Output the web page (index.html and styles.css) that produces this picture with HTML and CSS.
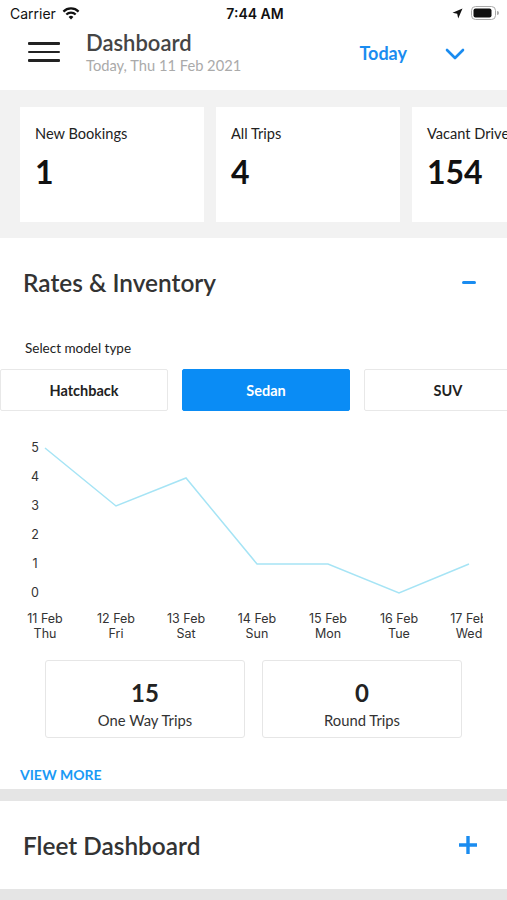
FILE: index.html
```html
<!DOCTYPE html>
<html lang="en">
<head>
  <meta charset="UTF-8">
  <meta name="viewport" content="width=device-width, initial-scale=1.0">
  <title>Dashboard</title>
  <link rel="stylesheet" href="styles.css">
</head>
<body>
  <div class="status-bar">
    <div class="status-left">
      <span>Carrier</span>
      <svg class="wifi" width="18" height="13" viewBox="0 0 18 13">
        <path d="M9 12.5 L6.6 9.9 A3.4 3.4 0 0 1 11.4 9.9 Z" fill="#111"/>
        <path d="M4.3 7.6 A6.6 6.6 0 0 1 13.7 7.6" stroke="#111" stroke-width="2.2" fill="none"/>
        <path d="M1.4 4.6 A10.8 10.8 0 0 1 16.6 4.6" stroke="#111" stroke-width="2.2" fill="none"/>
      </svg>
    </div>
    <div class="status-time">7:44 AM</div>
    <div class="status-right">
      <svg width="11" height="11" viewBox="0 0 11 11">
        <path d="M10.5 0.5 L0.5 4.8 L5.2 5.8 L6.2 10.5 Z" fill="#111"/>
      </svg>
      <svg width="29" height="14" viewBox="0 0 29 14">
        <rect x="0.5" y="0.5" width="24" height="13" rx="4" fill="none" stroke="#aaa"/>
        <rect x="2.5" y="2.5" width="18" height="9" rx="2" fill="#111"/>
        <path d="M26 5 Q28 5 28 7 Q28 9 26 9 Z" fill="#aaa"/>
      </svg>
    </div>
  </div>

  <header class="top-bar">
    <div class="menu-icon">
      <span></span><span></span><span></span>
    </div>
    <div class="title-block">
      <h1>Dashboard</h1>
      <div class="subtitle">Today, Thu 11 Feb 2021</div>
    </div>
    <div class="period">Today</div>
    <svg class="chevron" width="20" height="12" viewBox="0 0 20 12">
      <path d="M2 2 L10 10 L18 2" stroke="#1a8cf0" stroke-width="2.6" fill="none" stroke-linecap="round" stroke-linejoin="round"/>
    </svg>
  </header>

  <section class="stats-band">
    <div class="stat-card">
      <div class="stat-label">New Bookings</div>
      <div class="stat-value">1</div>
    </div>
    <div class="stat-card">
      <div class="stat-label">All Trips</div>
      <div class="stat-value">4</div>
    </div>
    <div class="stat-card">
      <div class="stat-label">Vacant Drivers</div>
      <div class="stat-value">154</div>
    </div>
  </section>

  <section class="panel">
    <div class="panel-head">
      <h2>Rates &amp; Inventory</h2>
      <span class="minus"></span>
    </div>
    <div class="select-label">Select model type</div>
    <div class="model-tabs">
      <div class="model-tab">Hatchback</div>
      <div class="model-tab active">Sedan</div>
      <div class="model-tab">SUV</div>
    </div>

    <svg class="chart" width="507" height="216" viewBox="0 0 507 216">
      <defs>
        <clipPath id="plot-clip"><rect x="0" y="0" width="483" height="216"/></clipPath>
      </defs>
      <g class="y-labels">
        <text x="35" y="20">5</text>
        <text x="35" y="49">4</text>
        <text x="35" y="78">3</text>
        <text x="35" y="107">2</text>
        <text x="35" y="136">1</text>
        <text x="35" y="165">0</text>
      </g>
      <polyline points="45,16 116,74 186,46 257,132 328,132 399,161 469,132" fill="none" stroke="#a6e4f5" stroke-width="1.5"/>
      <g class="x-labels" clip-path="url(#plot-clip)">
        <text x="45" y="191">11 Feb</text><text x="45" y="206">Thu</text>
        <text x="116" y="191">12 Feb</text><text x="116" y="206">Fri</text>
        <text x="186" y="191">13 Feb</text><text x="186" y="206">Sat</text>
        <text x="257" y="191">14 Feb</text><text x="257" y="206">Sun</text>
        <text x="328" y="191">15 Feb</text><text x="328" y="206">Mon</text>
        <text x="399" y="191">16 Feb</text><text x="399" y="206">Tue</text>
        <text x="469" y="191">17 Feb</text><text x="469" y="206">Wed</text>
      </g>
    </svg>

    <div class="trip-cards">
      <div class="trip-card">
        <div class="trip-value">15</div>
        <div class="trip-label">One Way Trips</div>
      </div>
      <div class="trip-card">
        <div class="trip-value">0</div>
        <div class="trip-label">Round Trips</div>
      </div>
    </div>

    <a class="view-more" href="#">VIEW MORE</a>
  </section>

  <section class="panel fleet">
    <div class="panel-head">
      <h2>Fleet Dashboard</h2>
      <svg width="20" height="20" viewBox="0 0 20 20">
        <path d="M10 1 V19 M1 10 H19" stroke="#1a8cf0" stroke-width="3.4"/>
      </svg>
    </div>
  </section>
  <div class="bottom-band"></div>
</body>
</html>
```

FILE: styles.css
```css
body {
  margin: 0;
  width: 507px;
  overflow: hidden;
  background-color: #ffffff;
  font-family: Lato, "Open Sans", sans-serif;
  color: #333;
}

.status-bar {
  height: 26px;
  display: flex;
  align-items: center;
  justify-content: space-between;
  padding: 0 7px 0 10px;
  font-family: Inter, "Liberation Sans", sans-serif;
  font-size: 14px;
  color: #111;
}

.status-left {
  display: flex;
  align-items: center;
  gap: 6px;
  width: 120px;
}

.status-time {
  font-weight: 600;
  font-size: 14px;
}

.status-right {
  display: flex;
  align-items: center;
  justify-content: flex-end;
  gap: 8px;
  width: 120px;
}

.top-bar {
  height: 64px;
  box-sizing: border-box;
  display: flex;
  align-items: flex-start;
  padding: 3px 0 0 28px;
}

.menu-icon {
  width: 32px;
  display: flex;
  flex-direction: column;
  gap: 6px;
  margin: 13px 26px 0 0;
}

.menu-icon span {
  display: block;
  height: 2.5px;
  background-color: #222;
  border-radius: 1px;
}

.title-block {
  flex: 1;
}

.title-block h1 {
  margin: 0;
  font-size: 22px;
  font-weight: 600;
  color: #454545;
  line-height: 28px;
}

.subtitle {
  font-size: 14.7px;
  color: #aaaaaa;
  line-height: 16px;
}

.period {
  font-size: 18px;
  font-weight: 700;
  color: #1a8cf0;
  margin: 13px 38px 0 0;
}

.chevron {
  margin: 19px 42px 0 0;
}

.stats-band {
  background-color: #f2f2f2;
  padding: 17px 0 16px 20px;
  display: flex;
  gap: 12px;
  overflow: hidden;
}

.stat-card {
  flex: 0 0 184px;
  height: 115px;
  box-sizing: border-box;
  background-color: #ffffff;
  padding: 18px 15px;
}

.stat-label {
  font-size: 14.6px;
  color: #222;
}

.stat-value {
  font-size: 32px;
  font-weight: 700;
  color: #111;
  margin-top: 10px;
}

.panel {
  background-color: #ffffff;
}

.panel-head {
  display: flex;
  align-items: center;
  justify-content: space-between;
  padding: 27px 29px 0 23px;
  height: 34px;
}

.panel-head h2 {
  margin: 0;
  font-size: 24.4px;
  font-weight: 600;
  color: #333;
}

.minus {
  display: block;
  width: 14px;
  height: 3px;
  border-radius: 2px;
  background-color: #1a8cf0;
  margin-right: 2px;
}

.select-label {
  font-size: 13.5px;
  color: #222;
  padding: 41px 0 0 25px;
  line-height: 16px;
}

.model-tabs {
  display: flex;
  gap: 14px;
  margin-top: 13px;
  overflow: hidden;
}

.model-tab {
  flex: 0 0 168px;
  height: 42px;
  box-sizing: border-box;
  border: 1px solid #e8e8e8;
  border-radius: 2px;
  display: flex;
  align-items: center;
  justify-content: center;
  font-size: 14.5px;
  font-weight: 700;
  color: #222;
}

.model-tab.active {
  background-color: #0a8cf5;
  border-color: #0a8cf5;
  color: #ffffff;
}

.chart {
  display: block;
  margin-top: 21px;
}

.chart text {
  font-family: Inter, "Liberation Sans", sans-serif;
  font-size: 12.5px;
  fill: #333;
}

.chart .x-labels text,
.chart .y-labels text {
  text-anchor: middle;
}

.trip-cards {
  display: flex;
  gap: 17px;
  padding: 12px 0 0 45px;
}

.trip-card {
  width: 200px;
  height: 78px;
  box-sizing: border-box;
  border: 1px solid #e6e6e6;
  border-radius: 3px;
  padding-top: 19px;
  display: flex;
  flex-direction: column;
  align-items: center;
}

.trip-value {
  font-size: 24px;
  font-weight: 700;
  color: #222;
  line-height: 26px;
}

.trip-label {
  font-size: 14.8px;
  color: #333;
  margin-top: 5px;
}

.view-more {
  display: block;
  padding: 28px 0 6px 20px;
  font-size: 14px;
  font-weight: 700;
  color: #1a9af5;
  text-decoration: none;
}

.fleet {
  border-top: 12px solid #e5e5e5;
  height: 88px;
}

.bottom-band {
  height: 20px;
  background-color: #e5e5e5;
}
```
